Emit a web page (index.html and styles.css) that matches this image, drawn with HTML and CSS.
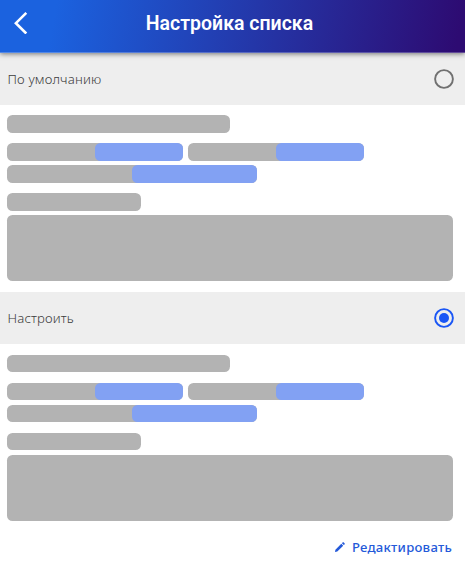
FILE: index.html
```html
<!DOCTYPE html>
<html lang="ru">
<head>
<meta charset="utf-8">
<title>Настройка списка</title>
<link rel="stylesheet" href="styles.css">
</head>
<body>
<header class="topbar">
  <svg class="back" viewBox="0 0 14 22"><path d="M12.3 .9 L1.9 11.2 L12.3 21.5"/></svg>
  <h1 class="title">Настройка списка</h1>
</header>
<main>
  <section>
    <div class="option">
      <span class="label">По умолчанию</span>
      <svg class="radio" viewBox="0 0 20 20"><circle class="ring" cx="10" cy="10" r="8.9"/></svg>
    </div>
    <div class="preview">
      <div class="bar heading"></div>
      <div class="tags">
        <div class="bar tag"><div class="value"></div></div>
        <div class="bar tag"><div class="value"></div></div>
        <div class="bar tag wide"><div class="value"></div></div>
      </div>
      <div class="bar caption"></div>
      <div class="bar block"></div>
    </div>
  </section>
  <section>
    <div class="option">
      <span class="label">Настроить</span>
      <svg class="radio checked" viewBox="0 0 20 20"><circle class="ring" cx="10" cy="10" r="8.9"/><circle class="dot" cx="10" cy="10" r="5"/></svg>
    </div>
    <div class="preview">
      <div class="bar heading"></div>
      <div class="tags">
        <div class="bar tag"><div class="value"></div></div>
        <div class="bar tag"><div class="value"></div></div>
        <div class="bar tag wide"><div class="value"></div></div>
      </div>
      <div class="bar caption"></div>
      <div class="bar block"></div>
    </div>
  </section>
  <div class="edit">
    <svg class="pencil" viewBox="0 0 10 10"><path d="M0 10 L.4 7.7 L6.3 1.8 L8.2 3.7 L2.3 9.6Z M6.9 1.2 L7.8 .3 Q8.2 0 8.6 .3 L9.7 1.4 Q10 1.8 9.7 2.2 L8.8 3.1Z"/></svg>
    <span>Редактировать</span>
  </div>
</main>
</body>
</html>
```
FILE: styles.css
```css
* { box-sizing: border-box; }
body {
  margin: 0;
  height: 564px;
  overflow: hidden;
  background: #fff;
  font-family: "Noto Sans", "Open Sans", sans-serif;
}
.topbar {
  position: relative;
  z-index: 1;
  display: grid;
  grid-template-columns: 40px 1fr 40px;
  height: 52.5px;
  padding-bottom: 6px;
  align-items: center;
  background: linear-gradient(100deg, #1b62df 12%, #2d0b72 98%);
  border-bottom: 1px solid rgba(255, 255, 255, .25);
  box-shadow: 0 1px 5px rgba(0, 0, 0, .5);
}
.back {
  width: 14px;
  height: 22px;
  margin-left: 13.5px;
  fill: none;
  stroke: #fff;
  stroke-width: 2.6;
}
.title {
  margin: 0;
  padding: 1.5px 6px 0 0;
  text-align: center;
  color: #fff;
  font: 600 19.5px/28px Roboto, sans-serif;
  white-space: nowrap;
}
.option {
  display: flex;
  align-items: center;
  justify-content: space-between;
  height: 52px;
  padding: 0 11px 0 7.5px;
  background: #eee;
}
.label {
  color: #3c3c3c;
  font-size: 13.2px;
  font-weight: 350;
  letter-spacing: .15px;
  line-height: 20px;
}
.radio { width: 20px; height: 20px; }
.ring { fill: none; stroke: #707070; stroke-width: 1.9; }
.checked .ring { stroke: #1a56f5; }
.dot { fill: #1a56f5; }
.preview {
  height: 187.5px;
  padding: 10.8px 12.3px 0 7.3px;
}
.bar {
  height: 17.5px;
  border-radius: 5.5px;
  background: #b3b3b3;
}
.heading { width: 222.7px; }
.tags {
  display: flex;
  flex-wrap: wrap;
  gap: 4.3px;
  margin: 10.6px 0;
}
.tag {
  display: flex;
  justify-content: flex-end;
  width: 176px;
}
.wide { width: 249.6px; }
.value {
  width: 50%;
  border-radius: 5.5px;
  background: #82a1f3;
}
.caption { width: 133.7px; }
.block {
  height: 66px;
  margin-top: 4.3px;
}
.edit {
  display: flex;
  align-items: center;
  justify-content: flex-end;
  gap: 7px;
  height: 20px;
  margin-top: 5.5px;
  padding-right: 13px;
  color: #2459d9;
  font-size: 13.1px;
  font-weight: 500;
  letter-spacing: .25px;
  line-height: 20px;
}
.pencil { width: 10px; height: 10px; fill: currentColor; }
```
